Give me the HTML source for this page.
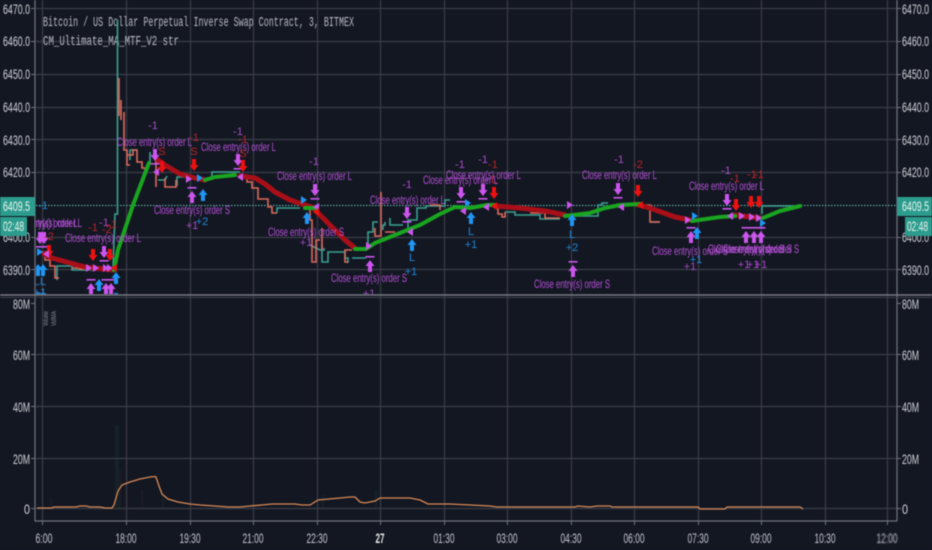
<!DOCTYPE html>
<html><head><meta charset="utf-8"><style>
html,body{margin:0;padding:0;background:#131722;width:932px;height:550px;overflow:hidden}
svg{display:block;filter:blur(.5px)}
text{font-family:"Liberation Sans",sans-serif}
.ax{fill:#d0d2d7;font-size:14px}
.t{fill:#c4c6cc;font-size:14px;text-anchor:middle}
.m{font-family:"Liberation Mono",monospace;fill:#b8bac0;font-size:13.500px}
.c{fill:#b650d8;font-size:12px}
.p{fill:#a64ac8;font-size:11px;text-anchor:middle}
.r{fill:#b82428;font-size:11px;text-anchor:middle}
.b{fill:#1e88d8;font-size:11px;text-anchor:middle}
</style></head><body>
<svg width="932" height="550" viewBox="0 0 932 550" xmlns="http://www.w3.org/2000/svg">
<defs>
<clipPath id="cl"><rect x="36" y="0" width="860" height="294"/></clipPath>
<g id="ad"><path d="M-2-6H2V0H4.500L0 6-4.500 0H-2Z" fill="#cc55ee"/><rect x="-4.500" y="8" width="9" height="1.600" fill="#cc55ee"/></g>
<g id="au"><path d="M-2 7H2V1H4.500L0-5-4.500 1H-2Z" fill="#cc55ee"/><rect x="-4.500" y="-9" width="9" height="1.600" fill="#cc55ee"/></g>
<path id="ar" d="M-2-6H2V0H4.500L0 6-4.500 0H-2Z" fill="#ee1111"/>
<path id="bu" d="M-2 6H2V0H4.500L0-6-4.500 0H-2Z" fill="#1f96f3"/>
<path id="tr" d="M-3-4 3 0-3 4Z" fill="#cc55ee"/>
<path id="tl" d="M3-4-3 0 3 4Z" fill="#cc55ee"/>
<path id="tb" d="M-3-4 3 0-3 4Z" fill="#1f96f3"/>
<path id="tx" d="M3-4-3 0 3 4Z" fill="#ee1111"/>
</defs>
<rect width="932" height="550" fill="#131722"/>
<!-- grid -->
<g stroke="#3b3e49" stroke-width="1.200">
<path d="M36 8.500H897M36 41.500H897M36 74.500H897M36 107.500H897M36 139.500H897M36 172.500H897M36 237.500H897M36 269.500H897"/>
<path d="M36 354.500H897M36 406.500H897M36 458.500H897M36 508.500H897"/>
<path d="M42.500 0V521M126.500 0V521M190.500 0V521M253.500 0V521M317.500 0V521M380.500 0V521M444.500 0V521M507.500 0V521M571.500 0V521M634.500 0V521M698.500 0V521M761.500 0V521M825.500 0V521M887.500 0V521"/>
</g>
<path d="M36 205.500H897" stroke="#5fc2b4" stroke-width="1" stroke-dasharray="1.500 1.500"/>
<!-- axes -->
<path d="M35 0V521H897M897 0V521" stroke="#70737d" stroke-width="1.200" fill="none"/>
<path d="M0 295H932" stroke="#777a84" stroke-width="1.600"/>
<path d="M0 297.500H932" stroke="#3b3e49" stroke-width="1"/>
<path d="M31 8.500H35M31 41.500H35M31 74.500H35M31 107.500H35M31 139.500H35M31 172.500H35M31 237.500H35M31 269.500H35M31 303.500H35M31 354.500H35M31 406.500H35M31 458.500H35M31 508.500H35M897 8.500H901M897 41.500H901M897 74.500H901M897 107.500H901M897 139.500H901M897 172.500H901M897 237.500H901M897 269.500H901M897 303.500H901M897 354.500H901M897 406.500H901M897 458.500H901M897 508.500H901M42.500 521V525M126.500 521V525M190.500 521V525M253.500 521V525M317.500 521V525M380.500 521V525M444.500 521V525M507.500 521V525M571.500 521V525M634.500 521V525M698.500 521V525M761.500 521V525M825.500 521V525M887.500 521V525" stroke="#70737d" stroke-width="1"/>
<!-- axis labels -->
<g class="ax">
<text x="3" y="14" textLength="27" lengthAdjust="spacingAndGlyphs">6470.0</text>
<text x="3" y="46" textLength="27" lengthAdjust="spacingAndGlyphs">6460.0</text>
<text x="3" y="79" textLength="27" lengthAdjust="spacingAndGlyphs">6450.0</text>
<text x="3" y="112" textLength="27" lengthAdjust="spacingAndGlyphs">6440.0</text>
<text x="3" y="145" textLength="27" lengthAdjust="spacingAndGlyphs">6430.0</text>
<text x="3" y="177" textLength="27" lengthAdjust="spacingAndGlyphs">6420.0</text>
<text x="3" y="242" textLength="27" lengthAdjust="spacingAndGlyphs">6400.0</text>
<text x="3" y="275" textLength="27" lengthAdjust="spacingAndGlyphs">6390.0</text>
<text x="902" y="14" textLength="27" lengthAdjust="spacingAndGlyphs">6470.0</text>
<text x="902" y="46" textLength="27" lengthAdjust="spacingAndGlyphs">6460.0</text>
<text x="902" y="79" textLength="27" lengthAdjust="spacingAndGlyphs">6450.0</text>
<text x="902" y="112" textLength="27" lengthAdjust="spacingAndGlyphs">6440.0</text>
<text x="902" y="145" textLength="27" lengthAdjust="spacingAndGlyphs">6430.0</text>
<text x="902" y="177" textLength="27" lengthAdjust="spacingAndGlyphs">6420.0</text>
<text x="902" y="242" textLength="27" lengthAdjust="spacingAndGlyphs">6400.0</text>
<text x="902" y="275" textLength="27" lengthAdjust="spacingAndGlyphs">6390.0</text>
<text x="13" y="309" textLength="17" lengthAdjust="spacingAndGlyphs">80M</text>
<text x="13" y="360" textLength="17" lengthAdjust="spacingAndGlyphs">60M</text>
<text x="13" y="412" textLength="17" lengthAdjust="spacingAndGlyphs">40M</text>
<text x="13" y="464" textLength="17" lengthAdjust="spacingAndGlyphs">20M</text>
<text x="24" y="514" textLength="6" lengthAdjust="spacingAndGlyphs">0</text>
<text x="902" y="309" textLength="17" lengthAdjust="spacingAndGlyphs">80M</text>
<text x="902" y="360" textLength="17" lengthAdjust="spacingAndGlyphs">60M</text>
<text x="902" y="412" textLength="17" lengthAdjust="spacingAndGlyphs">40M</text>
<text x="902" y="464" textLength="17" lengthAdjust="spacingAndGlyphs">20M</text>
<text x="902" y="514" textLength="6" lengthAdjust="spacingAndGlyphs">0</text>
</g>
<!-- time labels -->
<g class="t">
<text x="44" y="543" textLength="17" lengthAdjust="spacingAndGlyphs">6:00</text>
<text x="126" y="543" textLength="21" lengthAdjust="spacingAndGlyphs">18:00</text>
<text x="190" y="543" textLength="21" lengthAdjust="spacingAndGlyphs">19:30</text>
<text x="253" y="543" textLength="21" lengthAdjust="spacingAndGlyphs">21:00</text>
<text x="317" y="543" textLength="21" lengthAdjust="spacingAndGlyphs">22:30</text>
<text x="380" y="543" textLength="9" lengthAdjust="spacingAndGlyphs" font-weight="bold" fill="#e6e6e6">27</text>
<text x="444" y="543" textLength="21" lengthAdjust="spacingAndGlyphs">01:30</text>
<text x="507" y="543" textLength="21" lengthAdjust="spacingAndGlyphs">03:00</text>
<text x="571" y="543" textLength="21" lengthAdjust="spacingAndGlyphs">04:30</text>
<text x="634" y="543" textLength="21" lengthAdjust="spacingAndGlyphs">06:00</text>
<text x="698" y="543" textLength="21" lengthAdjust="spacingAndGlyphs">07:30</text>
<text x="761" y="543" textLength="21" lengthAdjust="spacingAndGlyphs">09:00</text>
<text x="825" y="543" textLength="21" lengthAdjust="spacingAndGlyphs">10:30</text>
</g>
<svg x="860" y="525" width="37" height="25"><text class="t" x="27" y="18" textLength="21" lengthAdjust="spacingAndGlyphs">12:00</text></svg>
<!-- title -->
<text class="m" x="43" y="26" textLength="311" lengthAdjust="spacingAndGlyphs">Bitcoin / US Dollar Perpetual Inverse Swap Contract, 3, BITMEX</text>
<text class="m" x="43" y="45" textLength="136" lengthAdjust="spacingAndGlyphs">CM_Ultimate_MA_MTF_V2 str</text>
<!-- small vertical study legend -->
<g fill="#8a8d95" font-size="7">
<text transform="translate(48,326) rotate(-90)" textLength="15" lengthAdjust="spacingAndGlyphs">Volume</text>
<text transform="translate(56,326) rotate(-90)" textLength="15" lengthAdjust="spacingAndGlyphs">VolMA</text>
</g>
<!-- faint volume bars -->
<g fill="#1d4a3a" opacity=".22">
<rect x="115" y="425" width="4" height="84"/><rect x="119" y="470" width="2" height="39" fill="#4a2a2e"/>
<rect x="126" y="480" width="2" height="29" fill="#3c2a30"/><rect x="141" y="490" width="2" height="19" fill="#3c2a30"/>
<rect x="162" y="495" width="2" height="14"/><rect x="375" y="490" width="2" height="19"/><rect x="322" y="495" width="2" height="14"/>
<rect x="50" y="498" width="2" height="11" fill="#2f2a30"/>
</g>
<!-- volume MA -->
<path d="M37 508H52L54 507H76L80 506H86L90 507H100L105 508H112L114 505 116 498 118 491 122 485 130 482 140 479 150 477 155 476.500 156 477 159 486 162 494 168 499 178 502 190 504 200 505 215 506 228 507 240 507 250 506 262 505 272 504 295 504 302 505 310 505 318 500 340 498 350 497 355 497 360 502 365 503 375 501 380 498 410 498 420 500 428 504 450 504 470 505 490 506 497 507 507 507H575L578 506 590 507 597 506H610L612 507H698L700 509H725L727 507H800L803 509" fill="none" stroke="#d98a55" stroke-width="1.300"/>
<g clip-path="url(#cl)">
<!-- candles -->
<path d="M57 280V266H72V270H96V268H113L115 214H117.500V20M117.500 92V212M130 160V150H137M150 162V152M158 180H165L167 176M177 186V177H190M212 180V172H240M277 213V208H300M310 245 320 250H324V248M322 245V262H328V252H345V258H348V263M352 258H366M368 248V232H373V222H378M383 230V225H385V222M390 218V225H403M408 228V220H417V208H426V206H445V200H450M473 207H482M505 212H515V215H540V219H560M575 216H598V205H602V203H608M650 222H660M720 217H730M762 214V206H798" fill="none" stroke="#3b9f90" stroke-width="1.600"/>
<path d="M37 252H45V260H50V266H55V278H59M72 268H80V269H96M119 78V116M121 100V120M124 112V150H127V165H130M127 155H133V150H137V162H142V168H145V172M156 155V187M165 178V187H176V180M240 176H247V182H252V188H258V199H268V207H272V213H277M310 205V220H312V262H316V240H320M322 250V228M352 250H345V262H348M381 192V236H375V228M385 232H395M430 205H440V210M490 205H498V214H502V217H505V212M530 213H545V218H560M620 205H650V222H660M690 220H700M735 216H745V218H760" fill="none" stroke="#dd6a5c" stroke-width="1.600"/>
<!-- MA -->
<g fill="none" stroke-linejoin="round" stroke-linecap="round">
<path d="M44 254 52 258 70 263 85 267 113 270M158 160 165 165 180 174 195 178 205 180M240 176 255 178 265 184 275 192 290 200 305 205 312 207 330 225 345 240 355 248M495 206 520 208 545 211 565 215M635 204 650 208 675 217 690 220M735 215 760 218" stroke="#a90f18" stroke-width="5"/>
<path d="M114 270 118 250 133 205 149 163M205 180 215 177 235 175M305 208H316M355 249H366L375 243 395 235 420 225 440 214 455 207 470 208 487 205 495 205M565 216 590 213 605 208 620 205 640 204M692 221 720 217 735 216M763 218 780 211 800 206" stroke="#1aa520" stroke-width="4"/>
</g>
<!-- markers -->
<use href="#ad" x="40" y="238"/><use href="#ad" x="44" y="238"/><use href="#ad" x="155" y="155"/><use href="#ad" x="238" y="160"/><use href="#ad" x="104" y="252"/><use href="#ad" x="315" y="190"/><use href="#ad" x="407" y="213"/><use href="#ad" x="461" y="193"/><use href="#ad" x="483" y="190"/><use href="#ad" x="618" y="189"/><use href="#ad" x="727" y="200"/>
<use href="#au" x="192" y="196"/><use href="#au" x="91" y="288"/><use href="#au" x="106" y="288"/><use href="#au" x="111" y="288"/><use href="#au" x="370" y="265"/><use href="#au" x="573" y="270"/><use href="#au" x="691" y="236"/><use href="#au" x="746" y="236"/><use href="#au" x="754" y="236"/><use href="#au" x="761" y="236"/>
<use href="#ar" x="93" y="255"/><use href="#ar" x="110" y="255"/><use href="#ar" x="49" y="251"/><use href="#ar" x="162" y="167"/><use href="#ar" x="194" y="165"/><use href="#ar" x="243" y="166"/><use href="#ar" x="494" y="193"/><use href="#ar" x="638" y="191"/><use href="#ar" x="736" y="205"/><use href="#ar" x="751" y="202"/><use href="#ar" x="759" y="202"/>
<use href="#bu" x="38" y="270"/><use href="#bu" x="43" y="270"/><use href="#bu" x="99" y="285"/><use href="#bu" x="116" y="278"/><use href="#bu" x="203" y="195"/><use href="#bu" x="412" y="245"/><use href="#bu" x="471" y="218"/><use href="#bu" x="572" y="220"/><use href="#bu" x="697" y="233"/><use href="#bu" x="307" y="218"/>
<use href="#tb" x="40" y="252"/><use href="#tl" x="46" y="254"/><use href="#tr" x="89" y="268"/><use href="#tr" x="96" y="268"/><use href="#tr" x="106" y="268"/><use href="#tr" x="110" y="268"/><use href="#tx" x="114" y="268"/><use href="#tl" x="156" y="172"/><use href="#tr" x="189" y="179"/><use href="#tb" x="200" y="178"/><use href="#tl" x="240" y="177"/><use href="#tb" x="304" y="200"/><use href="#tl" x="316" y="207"/><use href="#tx" x="316" y="212"/><use href="#tr" x="369" y="246"/><use href="#tl" x="410" y="232"/><use href="#tl" x="463" y="211"/><use href="#tb" x="468" y="203"/><use href="#tl" x="486" y="207"/><use href="#tx" x="494" y="206"/><use href="#tr" x="570" y="205"/><use href="#tl" x="621" y="207"/><use href="#tx" x="640" y="205"/><use href="#tr" x="688" y="220"/><use href="#tb" x="695" y="216"/><use href="#tl" x="730" y="216"/><use href="#tr" x="742" y="216"/><use href="#tr" x="752" y="217"/><use href="#tr" x="759" y="218"/><use href="#tb" x="763" y="223"/>
<!-- order labels -->
<g class="c">
<text x="7" y="227" textLength="75" lengthAdjust="spacingAndGlyphs">Close entry(s) order L</text>
<text x="3" y="227" textLength="75" lengthAdjust="spacingAndGlyphs">Close entry(s) order L</text>
<text x="117" y="146" textLength="75" lengthAdjust="spacingAndGlyphs">Close entry(s) order L</text>
<text x="201" y="151" textLength="75" lengthAdjust="spacingAndGlyphs">Close entry(s) order L</text>
<text x="65" y="242" textLength="76" lengthAdjust="spacingAndGlyphs">Close entry(s) order L</text>
<text x="154" y="214" textLength="76" lengthAdjust="spacingAndGlyphs">Close entry(s) order S</text>
<text x="277" y="180" textLength="75" lengthAdjust="spacingAndGlyphs">Close entry(s) order L</text>
<text x="268" y="236" textLength="76" lengthAdjust="spacingAndGlyphs">Close entry(s) order S</text>
<text x="370" y="204" textLength="75" lengthAdjust="spacingAndGlyphs">Close entry(s) order L</text>
<text x="423" y="184" textLength="75" lengthAdjust="spacingAndGlyphs">Close entry(s) order L</text>
<text x="446" y="179" textLength="75" lengthAdjust="spacingAndGlyphs">Close entry(s) order L</text>
<text x="331" y="282" textLength="76" lengthAdjust="spacingAndGlyphs">Close entry(s) order S</text>
<text x="534" y="288" textLength="76" lengthAdjust="spacingAndGlyphs">Close entry(s) order S</text>
<text x="582" y="179" textLength="75" lengthAdjust="spacingAndGlyphs">Close entry(s) order L</text>
<text x="652" y="255" textLength="76" lengthAdjust="spacingAndGlyphs">Close entry(s) order S</text>
<text x="689" y="190" textLength="75" lengthAdjust="spacingAndGlyphs">Close entry(s) order L</text>
<text x="708" y="253" textLength="76" lengthAdjust="spacingAndGlyphs">Close entry(s) order S</text>
<text x="716" y="253" textLength="76" lengthAdjust="spacingAndGlyphs">Close entry(s) order S</text>
<text x="723" y="253" textLength="76" lengthAdjust="spacingAndGlyphs">Close entry(s) order S</text>
</g>
<g class="p">
<text x="153" y="129">-1</text><text x="238" y="135">-1</text><text x="104" y="226">-1</text><text x="314" y="165">-1</text><text x="407" y="188">-1</text><text x="460" y="168">-1</text><text x="483" y="163">-1</text><text x="619" y="163">-1</text><text x="726" y="174">-1</text>
<text x="192" y="229">+1</text><text x="306" y="246">+1</text><text x="369" y="297">+1</text><text x="690" y="270">+1</text><text x="744" y="268">+1</text><text x="753" y="268">+1</text><text x="761" y="268">+1</text>
</g>
<g class="r">
<text x="93" y="231">-1</text><text x="107" y="233">-2</text><text x="112" y="228">-1</text><text x="49" y="240">-2</text><text x="194" y="141">-1</text><text x="194" y="155">S</text><text x="243" y="143">-1</text><text x="243" y="157">S</text><text x="162" y="155">S</text><text x="493" y="168">-1</text><text x="494" y="183">L</text><text x="638" y="168">-2</text><text x="735" y="182">-1</text><text x="752" y="178">-1</text><text x="759" y="178">-1</text>
</g>
<g class="b">
<text x="40" y="285">LL</text><text x="40" y="296">+1</text><text x="202" y="225">+2</text><text x="412" y="261">L</text><text x="411" y="275">+1</text><text x="471" y="235">L</text><text x="471" y="248">+1</text><text x="572" y="238">L</text><text x="572" y="251">+2</text><text x="696" y="263">+1</text><text x="43" y="209">-1</text>
</g>
<rect x="36" y="293" width="10" height="2" fill="#1f96f3"/><rect x="114" y="293" width="4" height="2" fill="#1f96f3"/>
</g>
<!-- tags -->
<rect x="0" y="197" width="35" height="19" fill="#2b9c8d"/>
<rect x="0" y="217" width="27" height="19" fill="#2b9c8d"/>
<rect x="897" y="197" width="35" height="19" fill="#2b9c8d"/>
<rect x="905" y="217" width="27" height="19" fill="#2b9c8d"/>
<g fill="#eef5f3" font-size="14">
<text x="3" y="211" textLength="27" lengthAdjust="spacingAndGlyphs">6409.5</text>
<text x="3" y="231" textLength="21" lengthAdjust="spacingAndGlyphs">02:48</text>
<text x="902" y="211" textLength="27" lengthAdjust="spacingAndGlyphs">6409.5</text>
<text x="907" y="231" textLength="21" lengthAdjust="spacingAndGlyphs">02:48</text>
</g>
</svg>
</body></html>
